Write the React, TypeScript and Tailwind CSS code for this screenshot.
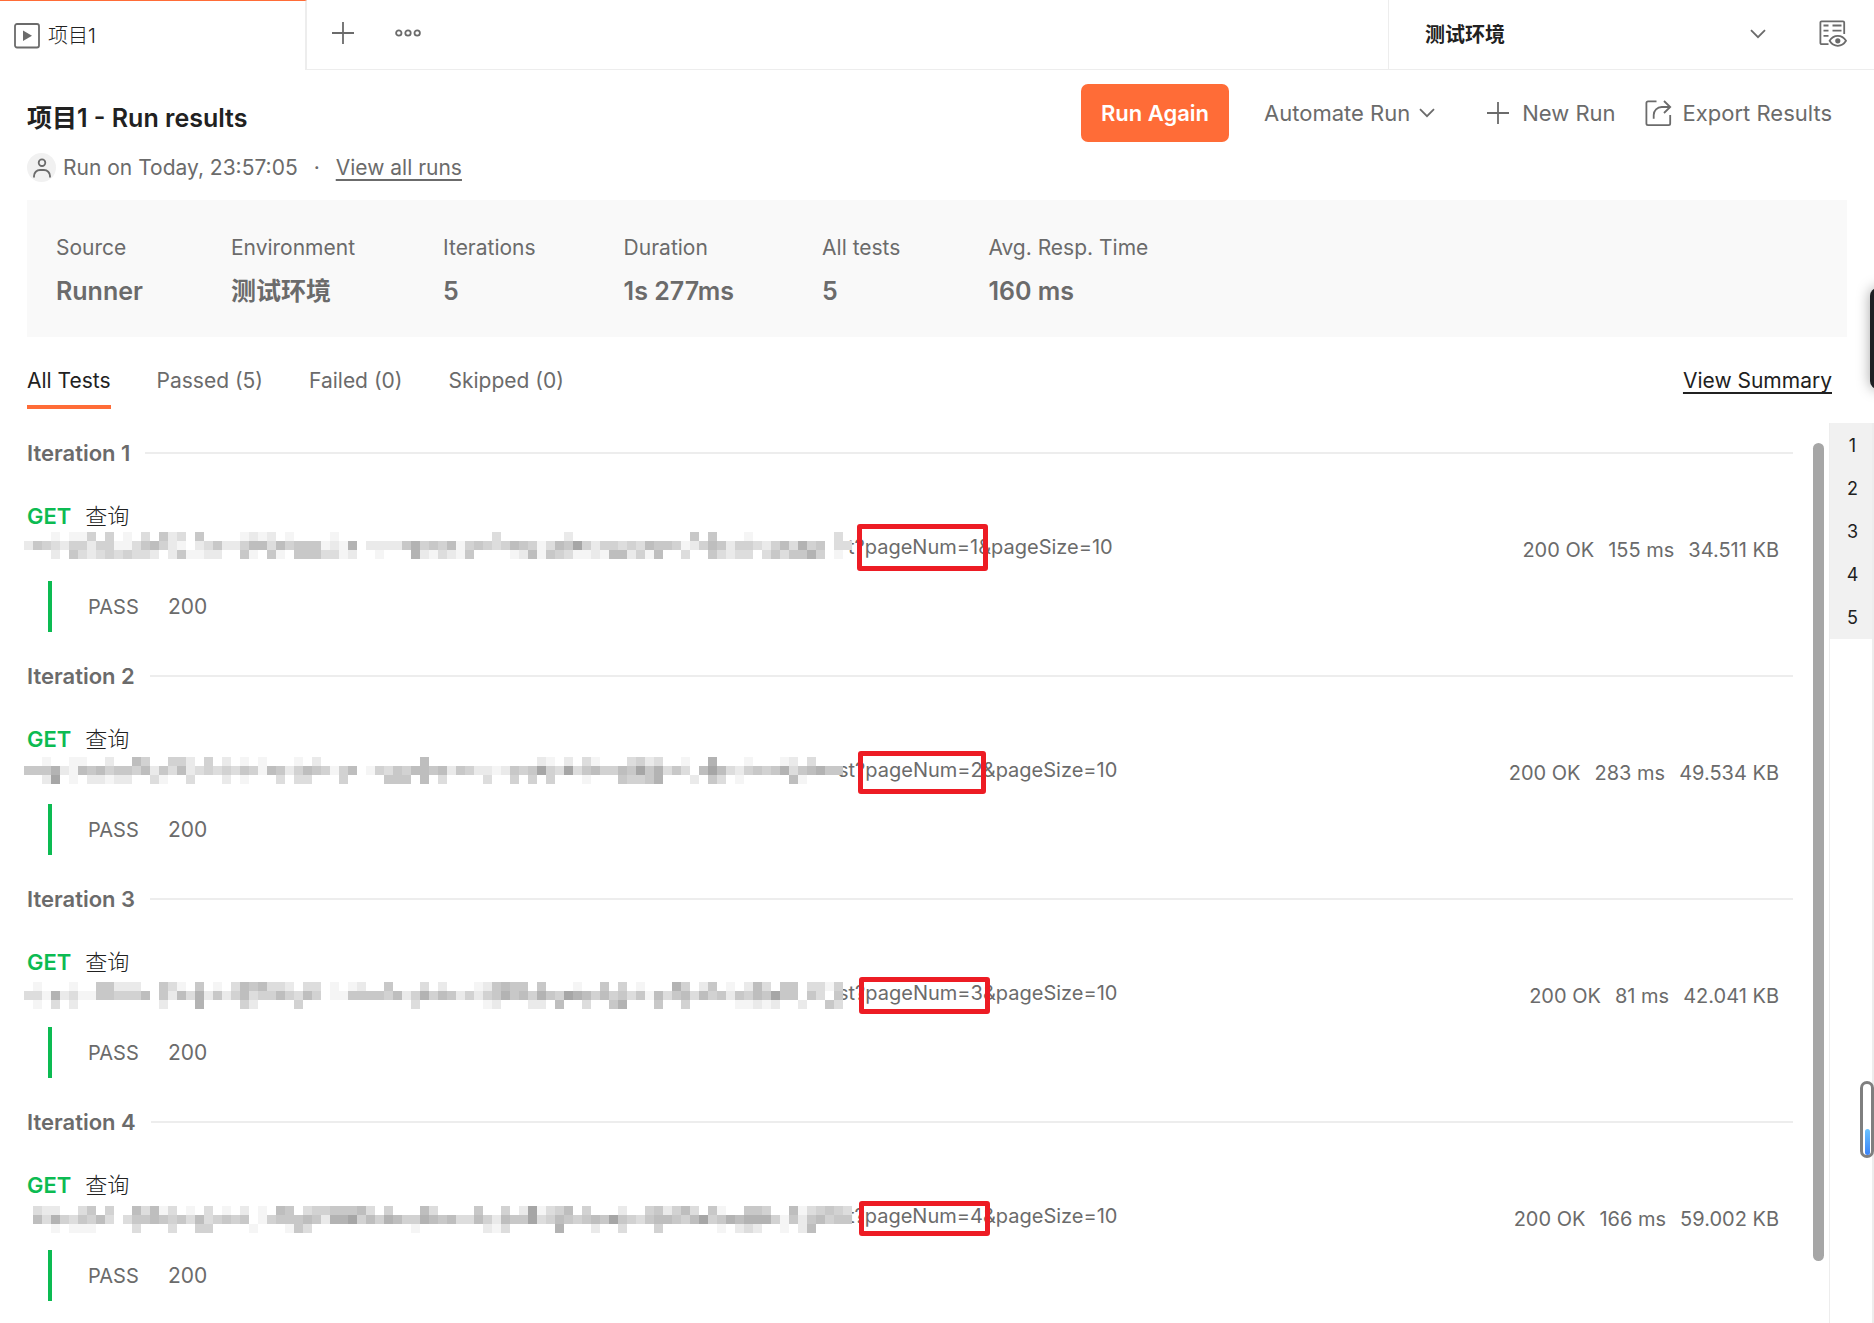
import React from "react";

interface Iteration {
  n: number;
  suffix: string;
  suffixMargin: string;
  time: string;
  size: string;
  box: string;
  mosaic: { x: number; y: number; rows: string[] };
}

const STATS = [
  ["Source", "Runner"],
  ["Environment", "测试环境"],
  ["Iterations", "5"],
  ["Duration", "1s 277ms"],
  ["All tests", "5"],
  ["Avg. Resp. Time", "160 ms"],
];

const TABS = ["All Tests", "Passed (5)", "Failed (0)", "Skipped (0)"];

const SHADES = ["#fff", "#f5f5f5", "#eaeaea", "#dddddd", "#d2d2d2", "#c8c8c8", "#bebebe", "#b3b3b3", "#a6a6a6"];

/* Each mosaic row is a list of runs written as "column:shades". */
const ITERATIONS: Iteration[] = [
  {
    n: 1,
    suffix: "t?pageNum=1&pageSize=10",
    suffixMargin: "ml-[821px]",
    time: "155 ms",
    size: "34.511 KB",
    box: "left-[830px] -top-[9px] h-[47px] w-[131px]",
    mosaic: {
      x: 0,
      y: 7,
      rows: [
        "3:1 5:114 9:4 11:1 13:3 15:523 19:5 24:1212 29:1 34:1 52:3 60:2 74:5 76:5 80:1 90:3",
        "0:2543244244 10:1135642102 20:3522466364 30:5551217 38:22225745 46:4614543465 56:4136584244 66:3436554124 76:6524432463 86:745033",
        "3:2 5:5323434332 16:251122 24:51 27:51 30:5553312 39:1 43:7213215 54:1 55:2615431 62:12166241 70:6 73:3 76:5323303535574 90:1",
      ],
    },
  },
  {
    n: 2,
    suffix: "st?pageNum=2&pageSize=10",
    suffixMargin: "ml-[811px]",
    time: "283 ms",
    size: "49.534 KB",
    box: "left-[831px] -top-[5px] h-[43px] w-[128px]",
    mosaic: {
      x: 0,
      y: 9,
      rows: [
        "2:1 5:11 9:2 12:64 16:442 20:4 22:2 24:1 26:1 30:1 32:2 44:6 57:21 60:2 62:31 67:3423 73:1 76:7 80:1 84:12 87:3",
        "0:5557216564 10:5546253623 20:4343541652 30:4654146014 40:3546656254 50:2212545843 60:8356446585 70:7353068632 80:45457356755",
        "2:28 5:1 7:22122 14:31 18:3 22:2 24:1 28:3 30:33 35:4 40:555 44:6 46:3 51:3 54:4 56:4 58:4 62:1 66:54457 74:2 76:53 79:1 85:61",
      ],
    },
  },
  {
    n: 3,
    suffix: "st?pageNum=3&pageSize=10",
    suffixMargin: "ml-[811px]",
    time: "81 ms",
    size: "42.041 KB",
    box: "left-[832px] -top-[2px] h-[37px] w-[131px]",
    mosaic: {
      x: 0,
      y: 11,
      rows: [
        "1:1 5:1 8:55222 15:531 19:5 21:1 23:3656332 31:33 34:1 36:12 40:5 44:3 46:2 50:125655 57:5 61:1 64:5 66:4 68:1 72:74 75:25 78:1 80:263 84:55 87:3314",
        "0:3317231155 10:4446 15:5263725246 25:34464364 34:1155554624 44:7465242457 54:5647548764 64:6453516356 74:3645254658 84:5505305",
        "1:1 3:3 5:2 15:2 19:7 24:42 30:4 43:3 51:12 56:22 59:6 62:3 65:57 70:5 73:4 79:11212 86:2 89:53",
      ],
    },
  },
  {
    n: 4,
    suffix: "t?pageNum=4&pageSize=10",
    suffixMargin: "ml-[821px]",
    time: "166 ms",
    size: "59.002 KB",
    box: "left-[832px] -top-[1px] h-[35px] w-[131px]",
    mosaic: {
      x: 9,
      y: 12,
      rows: [
        "0:322 5:35 8:4 11:63613 17:1 19:3 21:1 23:2 25:1 27:65 30:34455563 39:4 43:63 49:5 52:4 54:281 57:346 61:4 65:2 68:4524 72:63 75:51 79:554 84:61 86:34543",
        "0:637435463 10:3556545363 20:4545 25:1455565277 35:8464764476 45:5633642655 55:8346545658 65:5435665468 75:4576777415 85:256455",
        "2:1 4:11 6:1 11:3 15:3 18:44 24:1 28:153 42:1 50:21 52:3 58:7 62:2 65:3 69:4 76:1 78:232 83:1 85:26",
      ],
    },
  },
];

function Mosaic({ x, y, rows }: Iteration["mosaic"]) {
  const cells: React.ReactElement[] = [];
  rows.forEach((row, r) =>
    row.split(" ").forEach((run) => {
      const [start, shades] = run.split(":");
      shades.split("").forEach((s, i) => {
        if (s === "0") return;
        const col = Number(start) + i;
        cells.push(
          <rect key={`${r}-${col}`} x={x + col * 9} y={y + r * 9} width={9} height={9} fill={SHADES[Number(s)]} />,
        );
      });
    }),
  );
  return (
    <svg className="absolute -left-[3px] -top-2" width={840} height={44} shapeRendering="crispEdges" aria-hidden="true">
      {cells}
    </svg>
  );
}

function PlayBoxIcon() {
  return (
    <svg width="26" height="26" viewBox="0 0 26 26" fill="none" aria-hidden="true">
      <rect x="1" y="1" width="24" height="23.5" rx="2" stroke="#6b6b6b" strokeWidth="1.8" />
      <path d="M9 7.5 18 12.7 9 18Z" fill="#6b6b6b" />
    </svg>
  );
}

function PlusIcon() {
  return (
    <svg width="22" height="22" viewBox="0 0 22 22" fill="none" stroke="#6b6b6b" strokeWidth="1.8" aria-hidden="true">
      <path d="M11 0v22M0 11h22" />
    </svg>
  );
}

function DotsIcon() {
  return (
    <svg width="26" height="8" viewBox="0 0 26 8" fill="none" stroke="#6b6b6b" strokeWidth="1.8" aria-hidden="true">
      <circle cx="3.8" cy="4" r="2.7" />
      <circle cx="13" cy="4" r="2.7" />
      <circle cx="22.2" cy="4" r="2.7" />
    </svg>
  );
}

function ChevronIcon() {
  return (
    <svg width="16" height="10" viewBox="0 0 16 10" fill="none" stroke="#6b6b6b" strokeWidth="1.8" aria-hidden="true">
      <path d="M1 1.2 8 8.2 15 1.2" />
    </svg>
  );
}

function EnvironmentIcon() {
  return (
    <svg width="28" height="28" viewBox="0 0 28 28" fill="none" stroke="#6b6b6b" strokeWidth="1.8" aria-hidden="true">
      <path d="M9.5 24.2H2.6a1.2 1.2 0 0 1-1.2-1.2V2.600a1.200 1.200 0 0 1 1.200-1.200h21.400a1.200 1.200 0 0 1 1.200 1.200V14" />
      <path d="M4.500 5.500h5M13.500 5.500h9M4.500 10.700h5M13.500 10.700h9M4.500 15.800h5" />
      <path d="M10.600 20.800c2-3.300 5-5 8.200-5s6.200 1.700 8.200 5c-2 3.300-5 5-8.200 5s-6.200-1.700-8.200-5Z" />
      <circle cx="18.8" cy="20.8" r="1.7" fill="#6b6b6b" />
    </svg>
  );
}

function ExportIcon() {
  return (
    <svg width="27" height="27" viewBox="0 0 27 27" fill="none" stroke="#6b6b6b" strokeWidth="1.8" aria-hidden="true">
      <path d="M11.500 1.400H3a1.600 1.600 0 0 0-1.600 1.600v20.600a1.600 1.600 0 0 0 1.600 1.600h20.600a1.600 1.600 0 0 0 1.600-1.600V15" />
      <path d="M8.700 18.700v-3.700a8 8 0 0 1 8-8h8.300" />
      <path d="M19 1 25.200 7l-6.200 6" />
    </svg>
  );
}

function UserIcon() {
  return (
    <span className="flex size-[29px] items-center justify-center rounded-full bg-[#f1f1f1]">
      <svg width="18" height="20" viewBox="0 0 18 20" fill="none" stroke="#6b6b6b" strokeWidth="1.8" aria-hidden="true">
        <circle cx="9" cy="4.7" r="3.3" />
        <path d="M1 19.500v-1.500a6 6 0 0 1 6-6h4a6 6 0 0 1 6 6v1.500" />
      </svg>
    </span>
  );
}

function TopBar() {
  return (
    <header className="flex h-[70px] shrink-0">
      <div className="flex w-[307px] items-center gap-2 border-t border-r-2 border-t-[#ff6c37] border-r-[#ededed] pl-[14px]">
        <PlayBoxIcon />
        <span className="text-[20px] leading-7 font-light text-[#212121]">项目1</span>
      </div>
      <div className="flex flex-1 items-center gap-[41px] border-b border-[#ededed] pb-[3px] pl-[25px]">
        <button type="button" aria-label="New tab">
          <PlusIcon />
        </button>
        <button type="button" aria-label="Tab options">
          <DotsIcon />
        </button>
      </div>
      <div className="flex w-[486px] items-center border-b border-l border-[#ededed] pr-[27px] pb-[2px] pl-9">
        <div className="relative flex flex-1 items-center">
          <select
            aria-label="Environment"
            className="w-full appearance-none bg-transparent pt-[3px] text-[20px] leading-7 font-semibold text-[#212121]"
          >
            <option>测试环境</option>
          </select>
          <span className="pointer-events-none absolute right-0">
            <ChevronIcon />
          </span>
        </div>
        <button type="button" aria-label="Environment quick look" className="ml-[53px]">
          <EnvironmentIcon />
        </button>
      </div>
    </header>
  );
}

function RunHeader() {
  return (
    <section className="flex items-start justify-between pt-[14px] pr-[42px] pl-[27px]">
      <div className="pt-[18px]">
        <h1 className="text-[25px] leading-8 font-semibold text-[#212121]">项目1 - Run results</h1>
        <div className="mt-[19px] flex items-center text-[21px] leading-7 text-[#6b6b6b]">
          <UserIcon />
          <span className="ml-[7px]">Run on Today, 23:57:05</span>
          <span className="mx-4">·</span>
          <a href="#runs" className="underline decoration-2 underline-offset-4 [text-decoration-skip-ink:none]">
            View all runs
          </a>
        </div>
      </div>
      <div className="flex items-center text-[22px] leading-7 text-[#6b6b6b]">
        <button type="button" className="h-[58px] rounded-[7px] bg-[#ff6c37] px-5 font-semibold text-white">
          Run Again
        </button>
        <button type="button" className="ml-[35px] flex items-center gap-[9px]">
          Automate Run
          <ChevronIcon />
        </button>
        <button type="button" className="ml-[52px] flex items-center gap-[13px]">
          <PlusIcon />
          New Run
        </button>
        <button type="button" className="ml-[29px] flex items-center gap-[11px]">
          <ExportIcon />
          Export Results
        </button>
      </div>
    </section>
  );
}

function IterationBlock({ it }: { it: Iteration }) {
  return (
    <article className="pb-[30px] text-[22px] leading-7 text-[#6b6b6b]">
      <div className="flex items-center gap-[15px]">
        <h2 className="font-semibold">Iteration {it.n}</h2>
        <div className="h-[2px] flex-1 bg-[#ededed]" />
      </div>
      <div className="mt-[35px] flex items-center gap-[14px]">
        <span className="font-semibold text-[#0cbb52]">GET</span>
        <span className="font-light text-[#212121]">查询</span>
      </div>
      <div className="relative mt-[3px] flex h-[31px] items-start justify-between pr-[14px]">
        <span className={`${it.suffixMargin} text-[20px]`}>{it.suffix}</span>
        <Mosaic {...it.mosaic} />
        <div className={`absolute rounded-[3px] border-[5px] border-[#ed1c24] ${it.box}`} />
        <div className="flex gap-[14px] self-end text-[20px]">
          <span>200 OK</span>
          <span>{it.time}</span>
          <span>{it.size}</span>
        </div>
      </div>
      <div className="mt-[17px] ml-[21px] flex h-[51px] items-center border-l-4 border-[#0cbb52] pl-9">
        <span className="w-20 text-[20px]">PASS</span>
        <span className="text-[21px]">200</span>
      </div>
    </article>
  );
}

export default function App() {
  return (
    <div className="relative flex h-screen flex-col overflow-hidden bg-white font-['Inter','Noto_Sans_CJK_SC',sans-serif]">
      <TopBar />
      <RunHeader />
      <dl className="mx-[27px] mt-[18px] flex h-[137px] shrink-0 gap-[88px] bg-[#f9f9f9] pt-[34px] pl-[29px] text-[#6b6b6b]">
        {STATS.map(([label, value]) => (
          <div key={label}>
            <dt className="text-[21px] leading-7">{label}</dt>
            <dd className="mt-[13px] text-[25px] leading-8 font-semibold">{value}</dd>
          </div>
        ))}
      </dl>
      <nav className="mt-[30px] mr-[42px] ml-[27px] flex shrink-0 items-start gap-[46px] text-[21px] leading-7 text-[#6b6b6b]">
        {TABS.map((tab, i) => (
          <button
            key={tab}
            type="button"
            className={
              i === 0
                ? "border-b-4 border-[#ff6c37] pb-[10px] text-[#212121]"
                : "border-b-4 border-transparent pb-[10px]"
            }
          >
            {tab}
          </button>
        ))}
        <a
          href="#summary"
          className="ml-auto text-[#212121] underline decoration-2 underline-offset-4 [text-decoration-skip-ink:none]"
        >
          View Summary
        </a>
      </nav>
      <div className="mt-[14px] flex min-h-0 flex-1">
        <main className="min-w-0 flex-1 overflow-hidden pt-4 pr-5 pl-[27px]">
          {ITERATIONS.map((it) => (
            <IterationBlock key={it.n} it={it} />
          ))}
        </main>
        <div className="mt-5 mr-[5px] mb-[62px] w-[11px] rounded-full bg-[#a6a6a6]" />
        <aside className="w-[45px] border-r-2 border-l border-[#ededed]">
          <div className="flex flex-col bg-[#f1f1f1] pt-px">
            {[1, 2, 3, 4, 5].map((n) => (
              <button key={n} type="button" className="h-[43px] pl-[3px] text-[18px] leading-6 text-[#212121]">
                {n}
              </button>
            ))}
          </div>
        </aside>
      </div>
      <div className="absolute top-[288px] -right-5 h-[101px] w-6 rounded-lg bg-[#1f2024] shadow-[0_0_14px_rgba(0,0,0,0.35)]" />
      <div className="absolute top-[1081px] right-0 flex h-[77px] w-[14px] items-end justify-center rounded-full border-[3px] border-[#7f7f7f] bg-white">
        <div className="h-[26px] w-[5px] rounded-full bg-linear-to-b from-[#6cc3ff] to-[#3b82f6]" />
      </div>
    </div>
  );
}
